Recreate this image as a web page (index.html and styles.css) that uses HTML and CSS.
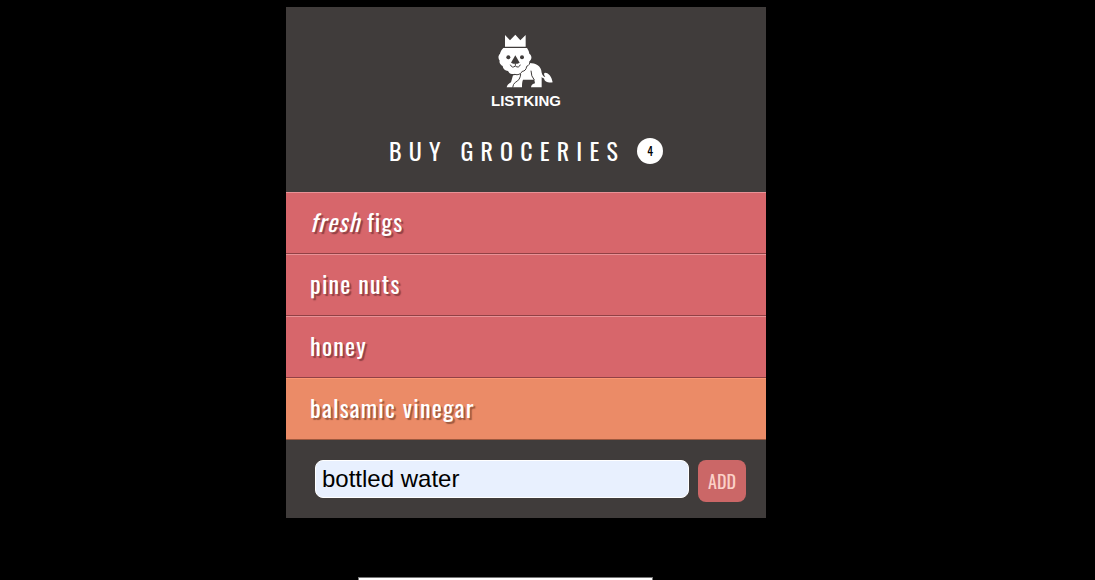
FILE: index.html
```
<!DOCTYPE html>
<html lang="en">
<head>
<meta charset="utf-8">
<title>ListKing</title>
<link rel="stylesheet" href="styles.css">
</head>
<body>
<main class="page">
  <section class="card">
    <header class="header">
      <div class="logo">
        <svg class="lion" viewBox="3 0 270 180" aria-hidden="true">
          <g fill="#fff">
            <path d="M75 21L90 37L106 20L121 37L137 21V56H75Z"/>
            <path d="M140 106C160 103 184 110 185 134C187 142 191 146 196 147C191 140 191 135 195 134C207 135 215 146 218 163C206 165 193 162 192 151C189 151 187 149 185 147V178H153C153 171 159 167 165 166L163 155H129C126 162 126 168 126 178H80C82 169 88 167 93 163L99 142C118 141 138 126 140 106Z"/>
            <path d="M70 60H141C145 66 147 70 148 77C156 83 156 92 150 98C150 107 146 112 140 114C139 124 133 129 127 129C122 138 112 141 105 138C96 141 88 137 84 129C75 128 69 123 68 114C61 110 57 104 59 98C54 91 54 83 60 77C62 69 65 65 70 60Z"/>
          </g>
          <g fill="#403c3b">
            <circle cx="85" cy="88" r="6"/>
            <circle cx="126" cy="88" r="6"/>
            <path d="M106 82L119 104Q106 111 93 104Z"/>
          </g>
          <g fill="none" stroke="#403c3b" stroke-width="3">
            <path d="M106 106V113M91 110Q96 122 106 114Q116 122 121 110"/>
            <path d="M150 99C150 108 146 113 140 115C139 125 133 130 127 130C122 139 112 142 105 139Q99 141 95 139"/>
            <path d="M122 138Q121 156 106 163Q99 168 98 179M153 128Q153 145 163 156"/>
          </g>
        </svg>
        <span class="brand">LISTKING</span>
      </div>
      <h1 class="title"><span class="title-text">BUY GROCERIES</span><span class="count">4</span></h1>
    </header>
    <ul class="list">
      <li class="item"><em>fresh</em> figs</li>
      <li class="item">pine nuts</li>
      <li class="item">honey</li>
      <li class="item item-cool">balsamic vinegar</li>
    </ul>
    <form class="form">
      <input class="field" type="text" value="bottled water" aria-label="New item">
      <button class="add" type="button">ADD</button>
    </form>
  </section>
</main>
<div class="panel-row"><div class="panel"></div></div>
</body>
</html>
```
FILE: styles.css
```
* { box-sizing: border-box; }
body {
  margin: 0;
  padding: 7px 43px 0 0;
  background: #000;
  color: #fff;
  font-family: Oswald, "Liberation Sans Narrow", "Roboto Condensed", sans-serif;
}
.page { padding-bottom: 59px; }
.card {
  max-width: 480px;
  margin: 0 auto;
  background: #403c3b;
}
.header { padding: 21px 20px 23px; }
.logo {
  display: flex;
  flex-direction: column;
  align-items: center;
}
.lion { width: 90px; height: 60px; }
.brand {
  margin-top: 4px;
  font: bold 15px/18px "Liberation Sans", Arial, sans-serif;
}
.title {
  display: flex;
  justify-content: center;
  align-items: flex-start;
  margin: 21px 0 0;
  font-size: 24px;
  font-weight: 400;
  line-height: 38px;
}
.title-text { letter-spacing: 0.3em; }
.count {
  width: 26px;
  margin: 7px 0 0 12px;
  border-radius: 50%;
  background: #fff;
  color: #000;
  font-size: 12px;
  line-height: 26px;
  text-align: center;
}
.list {
  margin: 0;
  padding: 0;
  list-style: none;
}
.item {
  padding: 8px 24px 12px;
  border-top: 1px solid #e99296;
  border-bottom: 1px solid #914145;
  background: #d7666b;
  font-size: 24px;
  line-height: 40px;
  letter-spacing: 0.05em;
  text-shadow: 2px 2px 1px #914145;
}
.item-cool {
  border-top-color: #fe9772;
  border-bottom-color: #9d593f;
  background: #eb8b67;
  text-shadow: 2px 2px 1px #9d593f;
}
.form {
  display: flex;
  align-items: flex-start;
  gap: 9px;
  padding: 20px 20px 16px 29px;
}
.field {
  flex: 1;
  min-width: 0;
  height: 38px;
  padding: 0 6px;
  border: 1px solid #fff;
  border-radius: 8px;
  background: #e8f0fe;
  color: #000;
  font: 24px "Liberation Sans", Arial, sans-serif;
}
.add {
  width: 48px;
  height: 42px;
  padding: 0;
  border: 0;
  border-radius: 8px;
  background: #cb6767;
  color: #fbd1c7;
  font-family: inherit;
  font-size: 18px;
}
.panel-row { padding-right: 41px; }
.panel {
  width: 295px;
  height: 3px;
  margin: 0 auto;
  border: 1px solid #767676;
  border-bottom: 0;
  background: #fff;
}
```
